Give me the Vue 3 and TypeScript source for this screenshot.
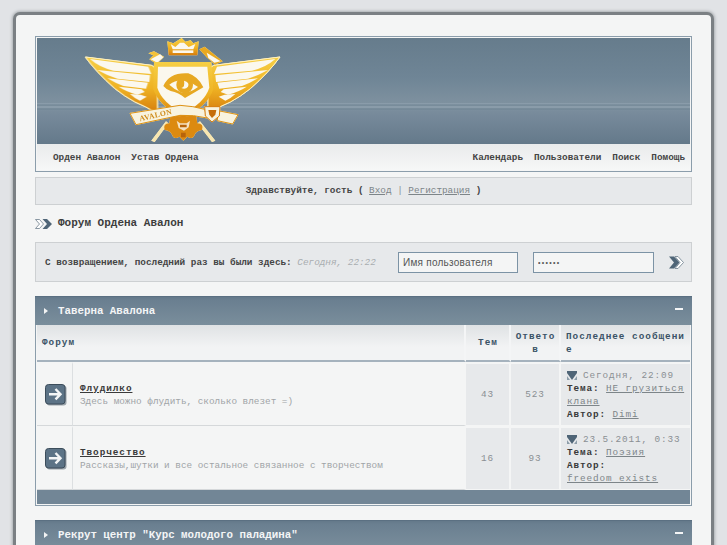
<script setup lang="ts">
interface Forum {
  name: string;
  desc: string;
  topics: number;
  replies: number;
  date: string;
  topic: string;
  author: string;
}

const forums: Forum[] = [
  {
    name: 'Флудилко',
    desc: 'Здесь можно флудить, сколько влезет =)',
    topics: 43,
    replies: 523,
    date: 'Сегодня, 22:09',
    topic: 'НЕ грузиться клана',
    author: 'Dimi',
  },
  {
    name: 'Творчество',
    desc: 'Рассказы,шутки и все остальное связанное с творчеством',
    topics: 16,
    replies: 93,
    date: '23.5.2011, 0:33',
    topic: 'Поэзия',
    author: 'freedom exists',
  },
];

const leftMenu = ['Орден Авалон', 'Устав Ордена'];
const rightMenu = ['Календарь', 'Пользователи', 'Поиск', 'Помощь'];
</script>

<template>
  <div class="page">
    <div class="frame">
      <header class="head">
        <div class="banner">
          <svg class="logo" viewBox="0 6 630 318" width="210" height="106">
            <defs>
              <linearGradient id="gold" x1="0" y1="0" x2="0" y2="1">
                <stop offset="0" stop-color="#f6cf45" />
                <stop offset="0.55" stop-color="#efb324" />
                <stop offset="1" stop-color="#d67c0c" />
              </linearGradient>
              <g id="wing">
                <path fill="url(#gold)" stroke="#fff0bd" stroke-width="3" d="M16 63 L215 88 L232 100 L232 232 Q195 210 165 198 Q135 182 105 158 Q50 110 16 63Z" />
                <path fill="#fbf8ee" d="M30 69 L205 92 L214 114 L100 104 Q58 94 30 69Z" />
                <path fill="#fbf8ee" d="M52 102 L210 118 L208 138 L112 128 Q80 118 52 102Z" />
                <path fill="#fbf8ee" d="M82 127 L204 140 L198 158 L130 150 Q105 141 82 127Z" />
                <path fill="#fbf8ee" d="M116 152 L185 160 L194 168 L172 176 Q140 168 116 152Z" />
                <path fill="#fbf8ee" d="M150 174 L182 176 L200 182 L180 194 Q162 186 150 174Z" />
              </g>
            </defs>
            <g class="logo-art">
              <use href="#wing" />
              <use href="#wing" transform="translate(616 0) scale(-1 1)" />
              <path fill="url(#gold)" d="M305 6 L316 17 L332 13 L340 22 L356 16 L352 58 L266 58 L262 16 L280 22 L292 14 Z" />
              <path fill="#fbf8ee" d="M272 24 L286 33 L300 20 L312 20 L326 33 L346 24 L340 40 L278 40Z" />
              <rect x="278" y="43" width="62" height="8" fill="#fbf8ee" />
              <path fill="#f3c138" d="M205 52 L222 46 L252 62 L230 84 L208 70 L220 58Z" />
              <path fill="#fbf8ee" d="M212 70 L240 55 L250 64 L232 80Z" />
              <path fill="#e9a91f" d="M358 40 L374 32 L428 76 L405 86 L380 64Z" />
              <path fill="#fbf8ee" d="M380 50 L422 76 L403 80 L385 66Z" />
              <path fill="url(#gold)" d="M222 78 L394 78 L400 160 Q384 210 310 246 Q236 210 220 160Z" />
              <path fill="#fbf8ee" d="M234 92 L382 92 L388 155 Q374 200 310 232 Q246 200 232 155Z" />
              <path fill="#e7a822" d="M250 150 Q268 108 325 112 Q355 122 370 154 Q340 172 315 186 Q296 170 272 165 Q258 160 250 150Z" />
              <path fill="#fbf8ee" d="M268 146 Q305 118 354 153 Q328 172 306 170 Q284 162 268 146Z" />
              <circle cx="314" cy="147" r="25" fill="#e7a822" />
              <path fill="#fbf8ee" d="M312 134 Q330 138 324 152 Q316 162 304 156 Q316 152 312 134Z" />
              <path fill="#f7e6b0" d="M258 256 L265 262 L224 318 L214 314Z" />
              <path fill="#f7e6b0" d="M360 256 L353 262 L396 318 L406 314Z" />
              <path fill="#dc8a10" d="M272 236 Q310 246 348 236 L352 262 Q372 262 366 282 Q350 284 344 296 Q338 312 322 302 L310 314 L298 302 Q282 312 276 296 Q270 284 254 282 Q248 262 268 262Z" />
              <path fill="#fbf8ee" d="M290 254 L300 262 L320 262 L330 254 L326 274 L312 284 L296 276Z" opacity="0.8" />
              <path fill="#b8640a" d="M300 266 H320 V274 H300Z M303 290 H317 V304 H303Z" />
              <path fill="#f8f3df" stroke="#dd9113" stroke-width="3" d="M150 232 L300 208 Q340 210 374 220 L382 246 Q340 236 300 238 L168 266Z" />
              <path fill="#f8f3df" stroke="#dd9113" stroke-width="3" d="M414 224 L474 236 L458 264 L412 254Z" />
              <path fill="#f8f3df" stroke="#d67c0c" stroke-width="3" d="M374 212 L420 212 L418 240 L396 258 L376 240Z" />
              <path fill="#c56d0a" d="M385 222 L409 222 L406 236 L396 246 L388 236Z" />
              <text class="logo-text" transform="translate(180 256) rotate(-13)">AVALON</text>
            </g>
          </svg>
        </div>
        <nav class="menu">
          <div class="menu-group">
            <span v-for="m in leftMenu" :key="m">{{ m }}</span>
          </div>
          <div class="menu-group">
            <span v-for="m in rightMenu" :key="m">{{ m }}</span>
          </div>
        </nav>
      </header>

      <div class="welcome">
        <b>Здравствуйте, гость</b> <b>(</b> <a>Вход</a> <span class="sep">|</span> <a>Регистрация</a> <b>)</b>
      </div>

      <h1 class="crumb">
        <svg width="18" height="10" viewBox="0 0 18 10">
          <path d="M0.5 0.5 H4.5 L8.5 5 L4.5 9.5 H0.5 L4.5 5Z" fill="#fff" stroke="#6d7f8d" stroke-width="0.8" />
          <path d="M7.5 0 H12 L17 5 L12 10 H7.5 L12 5Z" fill="#4f6577" />
        </svg>
        <span>Форум Ордена Авалон</span>
      </h1>

      <div class="login">
        <div class="login-text"><b>С возвращением, последний раз вы были здесь:</b> <i>Сегодня, 22:22</i></div>
        <input class="field" type="text" value="Имя пользователя" />
        <input class="field field-pass" type="password" value="Пароль" />
        <svg class="go" width="15" height="13" viewBox="0 0 15 13">
          <path d="M0 0.5 H5 L10.5 6.5 L5 12.5 H0 L5 6.5Z" fill="#4f6577" />
          <path d="M6 0.5 H9 L14.5 6.5 L9 12.5 H6 L11 6.5Z" fill="#fff" stroke="#6d7f8d" stroke-width="0.8" />
        </svg>
      </div>

      <section class="cat">
        <div class="cat-title">
          <span class="tri"></span>
          <span class="cat-name">Таверна Авалона</span>
          <span class="dash"></span>
        </div>
        <div class="grid">
          <div class="th th-forum">Форум</div>
          <div class="th th-c">Тем</div>
          <div class="th th-c">Ответов</div>
          <div class="th th-last">Последнее сообщение</div>
          <template v-for="f in forums" :key="f.name">
            <div class="td td-icon">
              <svg width="22" height="22" viewBox="0 0 22 22">
                <rect x="1.5" y="1.5" width="20" height="20" rx="3" fill="#9aa3aa" />
                <rect x="0.5" y="0.5" width="19.5" height="19.5" rx="3" fill="#5c7386" stroke="#3c4d5b" />
                <path d="M4 10.2 H14.5 M10.5 5 L15.5 10.2 L10.5 15.4" fill="none" stroke="#f3f5f6" stroke-width="2.4" />
              </svg>
            </div>
            <div class="td td-forum">
              <a class="f-name">{{ f.name }}</a>
              <div class="f-desc">{{ f.desc }}</div>
            </div>
            <div class="td td-num">{{ f.topics }}</div>
            <div class="td td-num">{{ f.replies }}</div>
            <div class="td td-last">
              <div>
                <svg class="last-ico" width="10" height="10" viewBox="0 0 10 10">
                  <path d="M0 6 L3 10 H0Z M10 6 L7 10 H10Z" fill="#8d9da9" />
                  <path d="M0 1 H10 V3 L5 10 L0 3Z" fill="#4f6577" />
                </svg><span class="last-date">{{ f.date }}</span>
              </div>
              <div><b>Тема:</b> <a>{{ f.topic }}</a></div>
              <div><b>Автор:</b> <a class="author">{{ f.author }}</a></div>
            </div>
          </template>
        </div>
        <div class="cat-foot"></div>
      </section>

      <section class="cat">
        <div class="cat-title">
          <span class="tri"></span>
          <span class="cat-name">Рекрут центр "Курс молодого паладина"</span>
          <span class="dash"></span>
        </div>
      </section>
    </div>
  </div>
</template>

<style>
html,
body {
  margin: 0;
  height: 100%;
  overflow: hidden;
}
</style>

<style scoped>
.page {
  height: 545px;
  overflow: hidden;
  box-sizing: border-box;
  padding: 12px 13px 0;
  background: #e1e3e6;
  font: 9.35px/13px "Liberation Mono", "Courier New", monospace;
  color: #454545;
}

.frame {
  box-sizing: border-box;
  width: 701px;
  min-height: 560px;
  padding: 21px 19px 0;
  background: #f4f5f5;
  border-radius: 7px 7px 0 0;
  border: solid #7b8084;
  border-width: 3px 3px 0;
  box-shadow: 0 0 3px 1px #a9adb1;
}

.head {
  border: 1px solid #8b9dab;
  padding: 1px;
  margin-bottom: 5px;
}

.banner {
  display: flex;
  height: 106px;
  padding-left: 43px;
  background:
    linear-gradient(transparent 65px, #8a9caa 65px, #8a9caa 66px, #6f8493 67px, #93a4b1 69px, #6f8493 71px, #7b8f9e 72px, transparent 73px),
    linear-gradient(#667c8c 0, #6f8596 40px, #7e919f 65px, #76899a 78px, #64798a 106px);
}

.logo {
  display: block;
}

.logo-art {
  filter: drop-shadow(0 0 2px #fff2c0);
}

.logo-text {
  font: bold 23px "Liberation Serif", serif;
  letter-spacing: 1px;
  fill: #cf8c1c;
}

.menu {
  display: flex;
  justify-content: space-between;
  height: 26px;
  align-items: center;
  padding: 0 5px 0 16px;
  background: linear-gradient(#e9ebec, #f6f7f7);
  font-weight: bold;
}

.menu-group {
  display: flex;
  gap: 11px;
}

.welcome {
  height: 28px;
  box-sizing: border-box;
  border: 1px solid #cdd0d2;
  background: #e7e9eb;
  text-align: center;
  line-height: 26px;
}

.welcome a {
  color: #7d8589;
  text-decoration: underline;
}

.sep {
  color: #8a8f93;
}

.crumb {
  display: flex;
  align-items: center;
  gap: 5px;
  margin: 12px 0;
  font: bold 11px/13px "Liberation Mono", "Courier New", monospace;
  color: #3d3d3d;
}

.login {
  display: flex;
  align-items: center;
  height: 40px;
  box-sizing: border-box;
  border: 1px solid #cdd0d2;
  background: #e7e9eb;
  padding: 0 7px 0 9px;
}

.login-text {
  flex: 1;
  white-space: nowrap;
}

.login-text i {
  color: #a9adb0;
}

.field {
  box-sizing: border-box;
  width: 120px;
  height: 21px;
  margin-right: 15px;
  padding: 0 4px;
  border: 1px solid #7c93a5;
  background: #f4f5f5;
  color: #555;
  font: 10px "Liberation Sans", Arial, sans-serif;
  letter-spacing: 0.25px;
  outline: none;
}

.field-pass {
  width: 121px;
  font-size: 7px;
  letter-spacing: 1.3px;
}

.go {
  flex: none;
}

.cat {
  margin-top: 14px;
}

.cat-title {
  display: flex;
  align-items: center;
  height: 29px;
  padding: 0 9px;
  background: linear-gradient(#64798a 0, #6a7f90 3px, #7a8e9c 100%);
  border-top: 1px solid #5b7082;
  box-sizing: border-box;
  color: #f4f5f6;
  font-size: 10.8px;
  font-weight: bold;
}

.tri {
  width: 0;
  height: 0;
  margin-right: 10px;
  border-left: 4px solid #f2f3f4;
  border-top: 3px solid transparent;
  border-bottom: 3px solid transparent;
}

.cat-name {
  flex: 1;
}

.dash {
  width: 8px;
  height: 2px;
  background: #f4f5f6;
  transform: translateY(-2px);
}

.grid {
  display: grid;
  grid-template-columns: 36px 393px 45px 50px 129px;
  border: solid #8b9dab;
  border-width: 0 1px;
  padding: 0 1px;
}

.th {
  display: flex;
  align-items: center;
  height: 37px;
  box-sizing: border-box;
  padding: 0 4px 0 5px;
  background: linear-gradient(#dfe2e4, #f2f3f4 22px);
  border-bottom: 2px solid #a5b2bd;
  border-right: 2px solid #f4f5f6;
  color: #3b5367;
  font-weight: bold;
  letter-spacing: 1px;
  word-break: break-all;
}

.th-forum {
  grid-column: span 2;
}

.th-c {
  justify-content: center;
  text-align: center;
  padding: 0 2px 0 3px;
}

.th-last {
  border-right: none;
}

.td {
  box-sizing: border-box;
  height: 64px;
  border-top: 2px solid #f4f5f5;
  border-bottom: 1px solid #f4f5f5;
  border-right: 2px solid #f4f5f5;
}

.td-icon {
  display: flex;
  align-items: center;
  padding-left: 8px;
  border-right: 1px solid #dcdfe1;
  border-bottom-color: #d5d8da;
}

.td-forum {
  display: flex;
  flex-direction: column;
  justify-content: center;
  padding-left: 7px;
  border-bottom-color: #d5d8da;
}

.f-name {
  color: #3a3a3a;
  font-weight: bold;
  text-decoration: underline;
  letter-spacing: 0.95px;
}

.f-desc {
  color: #a0a4a7;
}

.td-num {
  display: flex;
  align-items: center;
  justify-content: center;
  background: #e7e9eb;
  color: #8a8f93;
  letter-spacing: 0.9px;
}

.td-last {
  display: flex;
  flex-direction: column;
  justify-content: center;
  padding: 0 2px 0 6px;
  background: #e7e9eb;
  border-right: none;
  color: #8a8f93;
  letter-spacing: 0.9px;
}

.td-last b {
  color: #3a3a3a;
}

.td-last a {
  color: #7d8589;
  text-decoration: underline;
}

.td-last .author {
  white-space: nowrap;
}

.last-ico {
  vertical-align: -2px;
  margin-right: 6px;
}

.cat-foot {
  height: 16px;
  box-sizing: border-box;
  background: #728696;
  border: solid #8b9dab;
  border-width: 0 1px 1px;
  box-shadow: inset 1px 0 #f4f5f5, inset -1px 0 #f4f5f5, inset 0 -1px #f4f5f5;
}
</style>
